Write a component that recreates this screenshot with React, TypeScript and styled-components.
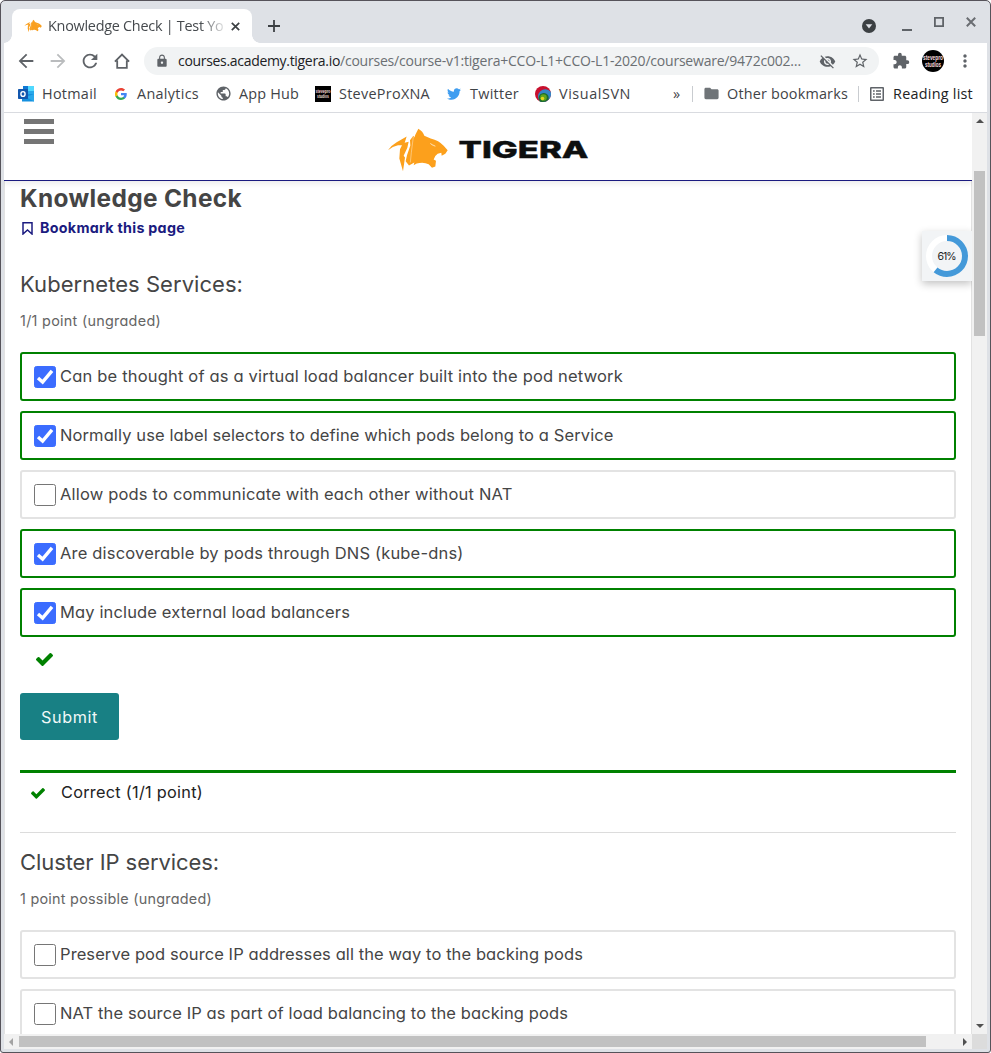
import React, { useLayoutEffect, useRef, useState } from 'react';
import styled, { createGlobalStyle, css } from 'styled-components';
import {
  MdArrowBack, MdArrowForward, MdRefresh, MdLock, MdVisibilityOff,
  MdStarBorder, MdExtension, MdMoreVert, MdFolder, MdPublic,
} from 'react-icons/md';
import { FaTwitter } from 'react-icons/fa';

const GlobalStyle = createGlobalStyle`
  *, *::before, *::after { box-sizing: border-box; }
  html, body { margin: 0; padding: 0; background: #fff; overflow: hidden; }
`;

const uiFont = css`font-family: 'Open Sans', 'Noto Sans', sans-serif;`;
const pageFont = css`
  font-family: Inter, 'Open Sans', sans-serif;
  font-feature-settings: 'cv11', 'ss03';
`;

/* ---------- text tracked to a set measure ---------- */

const Tracked = styled.span`
  display: inline-block;
  white-space: pre;
`;

function Measure({ width, children }: { width: number; children: string }) {
  const ref = useRef<HTMLSpanElement>(null);
  const [spacing, setSpacing] = useState(0);
  useLayoutEffect(() => {
    if (ref.current) {
      const natural = ref.current.getBoundingClientRect().width;
      setSpacing((width - natural) / children.length);
    }
  }, [width, children]);
  return <Tracked ref={ref} style={{ letterSpacing: spacing }}>{children}</Tracked>;
}

/* ---------- window ---------- */

const Window = styled.div`
  width: 991px;
  height: 1053px;
  display: flex;
  flex-direction: column;
  padding: 0 3px 3px;
  border: 1px solid #56535a;
  border-radius: 5px 5px 3px 3px;
  background: #dee1e6;
  overflow: hidden;
`;

const TabStrip = styled.div`
  flex: none;
  height: 42px;
  display: flex;
  align-items: flex-start;
  padding: 8px 11px 0 8px;
  ${uiFont}
`;

const Tab = styled.div`
  position: relative;
  width: 240px;
  height: 34px;
  display: flex;
  align-items: center;
  padding: 0 12px;
  border-radius: 8px 8px 0 0;
  background: #fff;
  &::before, &::after {
    content: '';
    position: absolute;
    bottom: 0;
    width: 8px;
    height: 8px;
  }
  &::before { left: -8px; background: radial-gradient(circle at 0 0, transparent 7.5px, #fff 8px); }
  &::after { right: -8px; background: radial-gradient(circle at 100% 0, transparent 7.5px, #fff 8px); }
`;

const TabTitle = styled.div`
  width: 177px;
  margin: 0 6px;
  overflow: hidden;
  white-space: nowrap;
  font-size: 14.4px;
  line-height: 20px;
  color: #45494d;
  mask-image: linear-gradient(to right, #000 152px, transparent 180px);
`;

const NewTab = styled.div`
  margin: 11px 0 0 16px;
  line-height: 0;
`;

const WindowControls = styled.div`
  margin-left: auto;
  display: flex;
  align-items: flex-start;
`;

const Control = styled.div<{ $top: number; $gap: number }>`
  margin: ${(p) => p.$top}px 0 0 ${(p) => p.$gap}px;
  line-height: 0;
`;

const Toolbar = styled.div`
  flex: none;
  height: 36px;
  display: flex;
  align-items: center;
  padding: 0 10px 0 11px;
  background: #fff;
  color: #5f6368;
  ${uiFont}
  svg { display: block; flex: none; }
`;

const NavButton = styled.div<{ $dim?: boolean; $inset?: number }>`
  width: 32px;
  display: flex;
  padding-left: ${(p) => p.$inset ?? 0}px;
  color: ${(p) => (p.$dim ? '#babcbe' : '#5f6368')};
`;

const AddressBar = styled.div`
  width: 735px;
  height: 28px;
  display: flex;
  align-items: center;
  padding: 0 10px 0 11px;
  margin-left: 1px;
  border-radius: 14px;
  background: #f1f3f4;
`;

const Url = styled.div`
  flex: 1;
  margin-left: 9px;
  font-size: 14px;
  line-height: 20px;
  color: #6b6f73;
  white-space: nowrap;
`;

const Host = styled.span`color: #202124;`;

const StarSlot = styled.div`margin-left: 15px;`;

const Extensions = styled.div`margin-left: 13px;`;

const Avatar = styled.div`
  width: 22px;
  height: 22px;
  margin: 0 11px 0 12px;
  border-radius: 50%;
  display: flex;
  background: #000;
`;

const Bookmarks = styled.div`
  flex: none;
  height: 34px;
  display: flex;
  align-items: center;
  gap: 16px;
  padding: 0 14px 4px;
  border-bottom: 1px solid #d9dbe0;
  background: #fff;
  color: #3f4347;
  font-size: 14.4px;
  line-height: 21px;
  ${uiFont}
  svg { display: block; flex: none; }
`;

const Bookmark = styled.div<{ $strong?: boolean }>`
  display: flex;
  align-items: center;
  gap: 8px;
  color: ${(p) => (p.$strong ? '#202124' : 'inherit')};
`;

const IconSlot = styled.div`
  width: 16px;
  height: 16px;
  display: flex;
  align-items: center;
  justify-content: center;
  color: #5f6368;
`;

const BookmarksEnd = styled.div`
  margin-left: auto;
  display: flex;
  align-items: center;
`;

const Divider = styled.div`
  width: 1px;
  height: 16px;
  margin: 0 10px;
  background: #c9ccd0;
`;

/* ---------- page and its scroll bars ---------- */

const Viewport = styled.div`
  flex: 1;
  min-height: 0;
  display: grid;
  grid-template-columns: 1fr 15px;
  grid-template-rows: 1fr 15px;
`;

const Page = styled.div`
  position: relative;
  min-height: 0;
  overflow: hidden;
  background: #fff;
  color: #454545;
  ${pageFont}
`;

const VScroll = styled.div`
  display: flex;
  flex-direction: column;
  align-items: center;
  justify-content: space-between;
  padding: 6px 0 6px;
  background: #f1f1f1;
`;

const VThumb = styled.div`
  width: 11px;
  height: 165px;
  margin: 48px 0 auto;
  background: #c1c1c1;
`;

const HScroll = styled.div`
  display: flex;
  align-items: center;
  padding: 0 5px;
  background: #f1f1f1;
`;

const HThumb = styled.div`
  width: 907px;
  height: 11px;
  margin: 0 auto 0 6px;
  background: #c1c1c1;
`;

const Corner = styled.div`background: #dcdcdc;`;

const Arrow = styled.svg`display: block; flex: none;`;

const SiteHeader = styled.header`
  position: relative;
  height: 68px;
  display: flex;
  align-items: flex-start;
  padding-left: 20px;
  border-bottom: 1px solid #1b1b80;
  box-shadow: 0 3px 5px rgba(0, 0, 0, 0.07);
  background: #fff;
`;

const Menu = styled.div`
  width: 30px;
  margin-top: 6px;
  display: grid;
  gap: 5px;
`;

const Bar = styled.div`
  height: 5px;
  background: #757575;
`;

const Brand = styled.svg`
  display: block;
  margin: 15px 0 0 333px;
`;

const Main = styled.main`
  height: 880px;
  padding: 0 15px;
  border: solid #e2e2e2;
  border-width: 0 1px;
`;

const Title = styled.h1`
  margin: 0;
  font-size: 24.4px;
  line-height: 35px;
  font-weight: 700;
`;

const BookmarkLink = styled.div`
  height: 24px;
  display: flex;
  align-items: center;
  gap: 7px;
  padding-left: 2px;
  font-size: 14.3px;
  line-height: 24px;
  font-weight: 700;
  color: #1b1b80;
`;

const Question = styled.section<{ $top: number }>`margin-top: ${(p) => p.$top}px;`;

const QuestionTitle = styled.h2`
  margin: 0;
  font-size: 22px;
  line-height: 29px;
  font-weight: 400;
`;

const Points = styled.div`
  margin: 10px 0 19px;
  font-size: 14.4px;
  line-height: 24px;
  color: #656565;
`;

const Choice = styled.div<{ $correct?: boolean }>`
  height: 49px;
  display: flex;
  align-items: center;
  gap: 4px;
  margin-bottom: 10px;
  padding: 0 0 1px 12px;
  border: 2px solid ${(p) => (p.$correct ? '#008100' : '#e3e3e3')};
  border-radius: 3px;
  font-size: 16.5px;
  line-height: 24px;
`;

const Box = styled.div<{ $on?: boolean }>`
  width: 22px;
  height: 22px;
  margin-top: 2px;
  border: 1px solid ${(p) => (p.$on ? '#3b6cff' : '#767676')};
  border-radius: 2.5px;
  background: ${(p) => (p.$on ? '#3b6cff' : '#fff')};
  svg { display: block; margin: -1px; }
`;

const Status = styled.div`
  padding: 6px 0 0 16px;
  height: 46px;
  svg { display: block; }
`;

const Submit = styled.button`
  display: block;
  width: 99px;
  height: 47px;
  padding: 0;
  border: 0;
  border-radius: 3px;
  background: #188084;
  color: #f2f8f8;
  font-size: 16.2px;
  line-height: 24px;
  ${pageFont}
`;

const Feedback = styled.div`
  height: 63px;
  margin-top: 30px;
  padding: 7px 0 0 11px;
  display: flex;
  align-items: flex-start;
  gap: 16px;
  border-top: 3px solid #008100;
  border-bottom: 1px solid #dcdcdc;
  font-size: 16.3px;
  line-height: 24px;
  color: #222;
  svg { display: block; margin-top: 8px; }
`;

const Progress = styled.div`
  position: absolute;
  top: 118px;
  right: 0;
  width: 50px;
  height: 50px;
  background: #f2f4f6;
  box-shadow: 0 3px 8px rgba(0, 0, 0, 0.24);
  svg { display: block; }
`;

/* ---------- drawings ---------- */

const Tiger = ({ fill = '#fca01c' }: { fill?: string }) => (
  <g fill={fill}>
    <path d="M24 113 Q34 98 50 89 L80 72 L74 91 L86 88 L82 106 L71 130 L75 135 L69 176 L58 138 L60 110 L66 98 L54 98 Q38 101 24 113Z" />
    <path d="M106 67 L115 49 Q129 57 133 70 L152 78 Q177 84 191 100 L203 113 L196 124 L185 130 L184 121 L173 124 Q162 132 161 141 L168 145 L166 162 L156 166 L146 155 Q130 147 110 153 L101 158 L103 150 L87 159 L77 146 L81 128 L91 99 L90 83 L100 70 L103 75Z" />
    <path d="M151 93 L166 101 L157 98Z M100 73 L94 120 L91 150" fill="none" stroke="#fff" strokeWidth="1.200" />
  </g>
);

const Check = ({ width }: { width: number }) => (
  <svg width={width} height={width * 0.766} viewBox="121 334 1550 1188" fill="#008100">
    <path d="M1671 566q0 40-28 68l-724 724-136 136q-28 28-68 28t-68-28l-136-136-362-362q-28-28-28-68t28-68l136-136q28-28 68-28t68 28l294 295 656-657q28-28 68-28t68 28l136 136q28 28 28 68z" />
  </svg>
);

const markText = {
  fontFamily: 'Liberation Sans',
  fontWeight: 700,
  fill: '#f7dede',
  textAnchor: 'middle' as const,
  lengthAdjust: 'spacingAndGlyphs',
};

const StudioMark = () => (
  <svg width="16" height="16" viewBox="0 0 16 16">
    <rect width="16" height="16" fill="#000" />
    <text x="8" y="7" fontSize="5" textLength="15" {...markText}>stevepro</text>
    <text x="8" y="12.200" fontSize="5" textLength="12" {...markText}>studios</text>
  </svg>
);

const AvatarMark = () => (
  <svg width="22" height="22" viewBox="0 0 22 22">
    <text x="11" y="10" fontSize="6.400" textLength="20" {...markText}>stevepro</text>
    <text x="11" y="16.600" fontSize="6.400" textLength="16" {...markText}>studios</text>
  </svg>
);

const Outlook = () => (
  <svg width="16" height="16" viewBox="0 0 16 16">
    <path d="M5 0h11v8H5z" fill="#28a8ea" />
    <path d="M10 0h6v5h-6z" fill="#50d9ff" />
    <path d="M5 0h5v5H5z" fill="#0f78d4" />
    <path d="M4 8h12v7.500H4z" fill="#1490df" />
    <path d="M16 8v7.500L8 11z" fill="#28a8ea" />
    <rect y="3" width="10" height="10" rx=".7" fill="#1257ae" />
    <ellipse cx="5" cy="8" rx="2.100" ry="2.400" fill="none" stroke="#fff" strokeWidth="1.400" />
  </svg>
);

const Google = () => (
  <svg width="12" height="12" viewBox="0 0 48 48">
    <path fill="#4285f4" d="M47 24.500c0-1.600-.2-3.200-.4-4.700H24v9h12.900c-.6 3-2.200 5.500-4.800 7.200v6h7.700C44.400 37.900 47 31.800 47 24.500z" />
    <path fill="#34a853" d="M24 48c6.500 0 11.900-2.100 15.900-5.800l-7.700-6c-2.200 1.400-4.900 2.300-8.200 2.300-6.300 0-11.600-4.200-13.500-9.900h-8v6.200C6.500 42.600 14.600 48 24 48z" />
    <path fill="#fbbc05" d="M10.500 28.600a14 14 0 0 1 0-9.200v-6.200h-8a24 24 0 0 0 0 21.600z" />
    <path fill="#ea4335" d="M24 9.500c3.500 0 6.700 1.200 9.200 3.600l6.900-6.900C35.900 2.400 30.500 0 24 0 14.600 0 6.500 5.400 2.500 13.200l8 6.200C12.400 13.700 17.700 9.500 24 9.500z" />
  </svg>
);

const Svn = () => (
  <svg width="16" height="16" viewBox="0 0 16 16">
    <circle cx="8" cy="8" r="8" fill="#c8102e" />
    <path d="M5 15.400A6.300 6.300 0 1 1 15.600 5.500 8 8 0 0 1 5 15.400z" fill="#3485c6" />
    <path d="M5 15.400a5 5 0 1 1 8.500-2A8 8 0 0 1 5 15.400z" fill="#1d6b2c" />
    <circle cx="8.500" cy="11.500" r="3.300" fill="#5fa51e" />
    <circle cx="7.500" cy="12.500" r="1.800" fill="#e4d51c" />
  </svg>
);

const ReadingList = () => (
  <svg width="14" height="14" viewBox="0 0 14 14" fill="#5f6368">
    <path fillRule="evenodd" d="M1 0h12q1 0 1 1v12q0 1-1 1H1q-1 0-1-1V1q0-1 1-1zM1.500 1.500v11h11v-11z" />
    <path d="M3 3.300h1.700v1.500H3zM6 3.300h5v1.500H6zM3 6.300h1.700v1.500H3zM6 6.300h5v1.500H6zM3 9.300h1.700v1.500H3zM6 9.300h5v1.500H6z" />
  </svg>
);

const Home = () => (
  <svg width="16" height="16" viewBox="0 0 16 16" fill="none" stroke="#5f6368" strokeWidth="1.800">
    <path d="M.9 8.700 8 1.500l7.100 7.200M3.200 7.500v7.400h9.600V7.500" />
  </svg>
);

const BrandLogo = () => (
  <Brand width="204" height="46" viewBox="0 0 204 46">
    <g transform="translate(-7 -15.500) scale(.3333)"><Tiger /></g>
    <text x="71.500" y="30.300" fontFamily="Inter, sans-serif" fontWeight="800" fontSize="23.600" fill="#0d0f0f" stroke="#0d0f0f" strokeWidth=".4" textLength="130" lengthAdjust="spacingAndGlyphs">TIGERA</text>
  </Brand>
);

const ProgressRing = () => (
  <Progress>
    <svg width="50" height="50" viewBox="0 0 50 50">
      <circle cx="25" cy="25" r="18" fill="none" stroke="#fff" strokeWidth="6" />
      <circle cx="25" cy="25" r="18" fill="none" stroke="#4499d9" strokeWidth="6" pathLength="100" strokeDasharray="61 39" transform="rotate(-90 25 25)" />
      <text x="25" y="29" textAnchor="middle" fontSize="10.500" fill="#222" textLength="19">61%</text>
    </svg>
  </Progress>
);

/* ---------- content ---------- */

type Option = { text: string; width: number; on?: boolean };

const services: Option[] = [
  { text: 'Can be thought of as a virtual load balancer built into the pod network', width: 563, on: true },
  { text: 'Normally use label selectors to define which pods belong to a Service', width: 553.5, on: true },
  { text: 'Allow pods to communicate with each other without NAT', width: 452.5 },
  { text: 'Are discoverable by pods through DNS (kube-dns)', width: 403.5, on: true },
  { text: 'May include external load balancers', width: 290, on: true },
];

const clusterIp: Option[] = [
  { text: 'Preserve pod source IP addresses all the way to the backing pods', width: 523 },
  { text: 'NAT the source IP as part of load balancing to the backing pods', width: 508 },
];

const links = [
  { label: 'Hotmail', width: 55, icon: <Outlook /> },
  { label: 'Analytics', width: 62, icon: <Google /> },
  { label: 'App Hub', width: 60, icon: <MdPublic size={17} /> },
  { label: 'SteveProXNA', width: 91, icon: <StudioMark /> },
  { label: 'Twitter', width: 49, icon: <FaTwitter size={14} color="#3f9df0" /> },
  { label: 'VisualSVN', width: 72, icon: <Svn /> },
];

const Choices = ({ items }: { items: Option[] }) => (
  <>
    {items.map((o) => (
      <Choice key={o.text} $correct={o.on}>
        <Box $on={o.on}>
          {o.on && (
            <svg width="22" height="22" viewBox="0 0 22 22" fill="none" stroke="#fff" strokeWidth="3.400">
              <path d="M4 12 8.600 16 18 4.800" />
            </svg>
          )}
        </Box>
        <Measure width={o.width}>{o.text}</Measure>
      </Choice>
    ))}
  </>
);

export default function App() {
  return (
    <>
      <GlobalStyle />
      <Window>
        <TabStrip>
          <Tab>
            <svg width="18" height="14" viewBox="20 46 185 132"><Tiger fill="#f9a021" /></svg>
            <TabTitle><Measure width={175.5}>Knowledge Check | Test Yo</Measure></TabTitle>
            <svg width="9" height="9" viewBox="0 0 9 9" stroke="#3c4043" strokeWidth="1.700"><path d="M.8.8l7.400 7.400M8.200.8.800 8.200" /></svg>
          </Tab>
          <NewTab>
            <svg width="12" height="12" viewBox="0 0 12 12" stroke="#3c4043" strokeWidth="1.800"><path d="M6 0v12M0 6h12" /></svg>
          </NewTab>
          <WindowControls>
            <Control $top={10} $gap={0}>
              <svg width="14" height="14" viewBox="0 0 14 14"><circle cx="7" cy="7" r="7" fill="#3c4043" /><path d="M3.700 5.200h6.600L7 9.500z" fill="#dee1e6" /></svg>
            </Control>
            <Control $top={16} $gap={26}>
              <svg width="10" height="2"><path d="M0 0h10v2H0z" fill="#5f6368" /></svg>
            </Control>
            <Control $top={8} $gap={22}>
              <svg width="10" height="10" fill="none" stroke="#5f6368" strokeWidth="1.800"><path d="M.9.9h8.200v8.200H.9z" /></svg>
            </Control>
            <Control $top={8} $gap={22}>
              <svg width="10" height="10" stroke="#6a6d72" strokeWidth="2"><path d="M.8.8l8.400 8.400M9.200.8.800 9.200" /></svg>
            </Control>
          </WindowControls>
        </TabStrip>

        <Toolbar>
          <NavButton><MdArrowBack size={22} /></NavButton>
          <NavButton $dim><MdArrowForward size={22} /></NavButton>
          <NavButton><MdRefresh size={22} /></NavButton>
          <NavButton $inset={3}><Home /></NavButton>
          <AddressBar>
            <MdLock size={14} />
            <Url>
              <Host><Measure width={162}>courses.academy.tigera.io</Measure></Host>
              <Measure width={461}>/courses/course-v1:tigera+CCO-L1+CCO-L1-2020/courseware/9472c002…</Measure>
            </Url>
            <MdVisibilityOff size={17} />
            <StarSlot><MdStarBorder size={18} /></StarSlot>
          </AddressBar>
          <Extensions><MdExtension size={18} /></Extensions>
          <Avatar><AvatarMark /></Avatar>
          <MdMoreVert size={20} />
        </Toolbar>

        <Bookmarks>
          {links.map((l) => (
            <Bookmark key={l.label}>
              <IconSlot>{l.icon}</IconSlot>
              <Measure width={l.width}>{l.label}</Measure>
            </Bookmark>
          ))}
          <BookmarksEnd>
            <Measure width={9}>»</Measure>
            <Divider />
            <Bookmark>
              <IconSlot><MdFolder size={17} color="#6f7478" /></IconSlot>
              <Measure width={121}>Other bookmarks</Measure>
            </Bookmark>
            <Divider />
            <Bookmark $strong>
              <IconSlot><ReadingList /></IconSlot>
              <Measure width={80}>Reading list</Measure>
            </Bookmark>
          </BookmarksEnd>
        </Bookmarks>

        <Viewport>
          <Page>
            <SiteHeader>
              <Menu><Bar /><Bar /><Bar /></Menu>
              <BrandLogo />
            </SiteHeader>
            <Main>
              <Title><Measure width={222}>Knowledge Check</Measure></Title>
              <BookmarkLink>
                <svg width="11" height="13" viewBox="0 0 11 13" fill="none" stroke="#1b1b80" strokeWidth="1.500"><path d="M1 .8h9v11.200L5.500 8 1 12z" /></svg>
                <Measure width={145}>Bookmark this page</Measure>
              </BookmarkLink>

              <Question $top={30}>
                <QuestionTitle><Measure width={223}>Kubernetes Services:</Measure></QuestionTitle>
                <Points><Measure width={141}>1/1 point (ungraded)</Measure></Points>
                <Choices items={services} />
                <Status><Check width={17} /></Status>
                <Submit><Measure width={57}>Submit</Measure></Submit>
                <Feedback>
                  <Check width={14} />
                  <Measure width={142}>Correct (1/1 point)</Measure>
                </Feedback>
              </Question>

              <Question $top={15}>
                <QuestionTitle><Measure width={199}>Cluster IP services:</Measure></QuestionTitle>
                <Points><Measure width={192}>1 point possible (ungraded)</Measure></Points>
                <Choices items={clusterIp} />
              </Question>
            </Main>
            <ProgressRing />
          </Page>
          <VScroll>
            <Arrow width="8" height="4" viewBox="0 0 8 4" fill="#505050"><path d="M0 4h8L4 0z" /></Arrow>
            <VThumb />
            <Arrow width="8" height="4" viewBox="0 0 8 4" fill="#505050"><path d="M0 0h8L4 4z" /></Arrow>
          </VScroll>
          <HScroll>
            <Arrow width="4" height="8" viewBox="0 0 4 8" fill="#a3a3a3"><path d="M4 0v8L0 4z" /></Arrow>
            <HThumb />
            <Arrow width="4" height="8" viewBox="0 0 4 8" fill="#505050"><path d="M0 0v8l4-4z" /></Arrow>
          </HScroll>
          <Corner />
        </Viewport>
      </Window>
    </>
  );
}
